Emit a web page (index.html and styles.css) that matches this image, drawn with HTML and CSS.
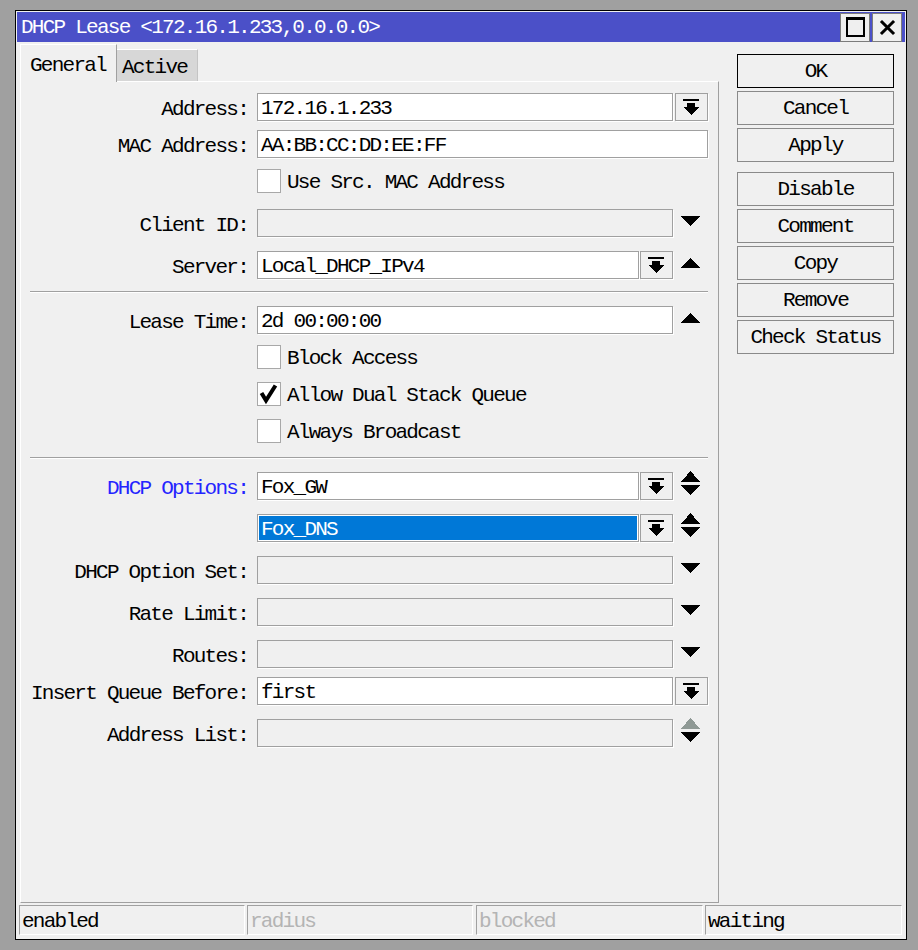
FILE: index.html
```html
<!DOCTYPE html>
<html>
<head>
<meta charset="utf-8">
<link rel="stylesheet" href="styles.css">
</head>
<body>
<div class="window">
  <div class="titlebar">
    <span class="title">DHCP Lease &lt;172.16.1.233,0.0.0.0&gt;</span>
    <div class="tb-buttons">
      <span class="tb-btn"><svg width="28" height="27" viewBox="0 0 28 27"><path d="M5 3H24V23H5Z M7 6V21H22V6Z" fill="#000" fill-rule="evenodd"/></svg></span>
      <span class="tb-btn"><svg width="28" height="27" viewBox="0 0 28 27"><path d="M9 8L20 19M20 8L9 19" stroke="#000" stroke-width="3" stroke-linecap="square"/></svg></span>
    </div>
  </div>
  <div class="main">
    <div class="left">
      <div class="tabs">
        <div class="tab tab-general">General</div>
        <div class="tab tab-active">Active</div>
      </div>
      <div class="panel">
        <div class="row">
          <span class="lbl">Address:</span>
          <div class="field">
            <div class="inp">172.16.1.233</div>
            <div class="dd"><svg width="31" height="26" viewBox="0 0 31 26"><path d="M7 5H23V7H7Z M11 9H19V13H23L15 21L7 13H11Z" fill="#000" shape-rendering="crispEdges"/></svg></div>
          </div>
        </div>
        <div class="row">
          <span class="lbl">MAC Address:</span>
          <div class="field">
            <div class="inp">AA:BB:CC:DD:EE:FF</div>
          </div>
        </div>
        <div class="row">
          <span class="lbl"></span>
          <div class="field check">
            <span class="cb"></span><span class="cbtext">Use Src. MAC Address</span>
          </div>
        </div>
        <div class="row ar">
          <span class="lbl">Client ID:</span>
          <div class="field">
            <div class="inp dis"></div>
            <div class="arr"><svg width="19" height="28" viewBox="0 0 19 28"><polygon points="0,7 19,7 9.5,17" fill="#000"/></svg></div>
          </div>
        </div>
        <div class="row ar">
          <span class="lbl">Server:</span>
          <div class="field">
            <div class="inp">Local_DHCP_IPv4</div>
            <div class="dd n"><svg width="31" height="26" viewBox="0 0 31 26"><path d="M7 5H23V7H7Z M11 9H19V13H23L15 21L7 13H11Z" fill="#000" shape-rendering="crispEdges"/></svg></div>
            <div class="arr"><svg width="19" height="28" viewBox="0 0 19 28"><polygon points="9.5,7 19,17 0,17" fill="#000"/></svg></div>
          </div>
        </div>
        <div class="sep"></div>
        <div class="row ar">
          <span class="lbl">Lease Time:</span>
          <div class="field">
            <div class="inp">2d 00:00:00</div>
            <div class="arr"><svg width="19" height="28" viewBox="0 0 19 28"><polygon points="9.5,7 19,17 0,17" fill="#000"/></svg></div>
          </div>
        </div>
        <div class="row">
          <span class="lbl"></span>
          <div class="field check">
            <span class="cb"></span><span class="cbtext">Block Access</span>
          </div>
        </div>
        <div class="row">
          <span class="lbl"></span>
          <div class="field check">
            <span class="cb"><svg width="22" height="22" viewBox="0 0 22 22"><polyline points="3.5,10 8,17.5 17.5,2.5" fill="none" stroke="#000" stroke-width="4" stroke-linejoin="miter"/></svg></span><span class="cbtext">Allow Dual Stack Queue</span>
          </div>
        </div>
        <div class="row">
          <span class="lbl"></span>
          <div class="field check">
            <span class="cb"></span><span class="cbtext">Always Broadcast</span>
          </div>
        </div>
        <div class="sep"></div>
        <div class="row ar">
          <span class="lbl blue">DHCP Options:</span>
          <div class="field">
            <div class="inp">Fox_GW</div>
            <div class="dd n"><svg width="31" height="26" viewBox="0 0 31 26"><path d="M7 5H23V7H7Z M11 9H19V13H23L15 21L7 13H11Z" fill="#000" shape-rendering="crispEdges"/></svg></div>
            <div class="arr"><svg width="19" height="28" viewBox="0 0 19 28" overflow="visible"><polygon points="9.5,-1 19,10 0,10" fill="#000"/><polygon points="0,13 19,13 9.5,23" fill="#000"/></svg></div>
          </div>
        </div>
        <div class="row ar">
          <span class="lbl"></span>
          <div class="field">
            <div class="inp sel"><span class="selfill">Fox_DNS</span></div>
            <div class="dd n"><svg width="31" height="26" viewBox="0 0 31 26"><path d="M7 5H23V7H7Z M11 9H19V13H23L15 21L7 13H11Z" fill="#000" shape-rendering="crispEdges"/></svg></div>
            <div class="arr"><svg width="19" height="28" viewBox="0 0 19 28" overflow="visible"><polygon points="9.5,-1 19,10 0,10" fill="#000"/><polygon points="0,13 19,13 9.5,23" fill="#000"/></svg></div>
          </div>
        </div>
        <div class="row ar">
          <span class="lbl">DHCP Option Set:</span>
          <div class="field">
            <div class="inp dis"></div>
            <div class="arr"><svg width="19" height="28" viewBox="0 0 19 28"><polygon points="0,7 19,7 9.5,17" fill="#000"/></svg></div>
          </div>
        </div>
        <div class="row ar">
          <span class="lbl">Rate Limit:</span>
          <div class="field">
            <div class="inp dis"></div>
            <div class="arr"><svg width="19" height="28" viewBox="0 0 19 28"><polygon points="0,7 19,7 9.5,17" fill="#000"/></svg></div>
          </div>
        </div>
        <div class="row ar">
          <span class="lbl">Routes:</span>
          <div class="field">
            <div class="inp dis"></div>
            <div class="arr"><svg width="19" height="28" viewBox="0 0 19 28"><polygon points="0,7 19,7 9.5,17" fill="#000"/></svg></div>
          </div>
        </div>
        <div class="row">
          <span class="lbl">Insert Queue Before:</span>
          <div class="field">
            <div class="inp">first</div>
            <div class="dd"><svg width="31" height="26" viewBox="0 0 31 26"><path d="M7 5H23V7H7Z M11 9H19V13H23L15 21L7 13H11Z" fill="#000" shape-rendering="crispEdges"/></svg></div>
          </div>
        </div>
        <div class="row ar">
          <span class="lbl">Address List:</span>
          <div class="field">
            <div class="inp dis"></div>
            <div class="arr"><svg width="19" height="28" viewBox="0 0 19 28" overflow="visible"><polygon points="9.5,-1 19,9.5 0,9.5" fill="#8f9995"/><polygon points="0,13 19,13 9.5,23" fill="#000"/></svg></div>
          </div>
        </div>
      </div>
    </div>
    <div class="btns">
      <div class="btn ok">OK</div>
      <div class="btn">Cancel</div>
      <div class="btn">Apply</div>
      <div class="btn gap">Disable</div>
      <div class="btn">Comment</div>
      <div class="btn">Copy</div>
      <div class="btn">Remove</div>
      <div class="btn">Check Status</div>
    </div>
  </div>
  <div class="status">
    <div class="cell c1">enabled</div>
    <div class="cell c2 faded">radius</div>
    <div class="cell c3 faded">blocked</div>
    <div class="cell c4">waiting</div>
  </div>
</div>
</body>
</html>
```
FILE: styles.css
```css
* { box-sizing: border-box; }
html, body { margin: 0; background: #a0a0a0; }
body {
  font-family: "Liberation Mono", monospace;
  font-size: 21px;
  letter-spacing: -1.75px;
  color: #000;
  width: 918px;
  height: 950px;
  overflow: hidden;
}
.window {
  margin: 10px 0 0 15px;
  width: 892px;
  height: 930px;
  border: 1px solid #000;
  background: #f0f0f0;
  padding: 1px;
  display: flex;
  flex-direction: column;
}
.titlebar {
  height: 30px;
  flex: none;
  background: #4b50c8;
  color: #fff;
  display: flex;
  align-items: center;
  justify-content: space-between;
  padding: 0 3px 0 4px;
}
.title { white-space: pre; padding-top: 2px; line-height: 28px; }
.tb-buttons { display: flex; gap: 2px; align-self: flex-end; }
.tb-btn {
  display: block;
  width: 30px;
  height: 29px;
  background: #efefef;
  border: 1px solid #7c7c7c;
}
.tb-btn svg { display: block; }
.main {
  display: flex;
  height: 861px;
  flex: none;
  padding: 2px 11px 0 3px;
}
.left { width: 699px; display: flex; flex-direction: column; }
.tabs { display: flex; height: 37px; align-items: flex-start; flex: none; }
.tab { white-space: pre; }
.tab-general {
  width: 97px;
  height: 38px;
  margin-bottom: -1px;
  position: relative;
  z-index: 1;
  background: #f0f0f0;
  border-top: 1px solid #fff;
  border-left: 1px solid #fff;
  border-right: 1px solid #a0a0a0;
  padding: 7px 0 0 9px;
  line-height: 28px;
}
.tab-active {
  width: 81px;
  height: 32px;
  margin-top: 5px;
  background: #d7d7d7;
  border-top: 1px solid #fff;
  border-right: 1px solid #c4c4c4;
  padding: 4px 0 0 5px;
  line-height: 28px;
}
.panel {
  height: 822px;
  flex: none;
  border-top: 1px solid #fff;
  border-left: 1px solid #fff;
  border-right: 1px solid #a0a0a0;
  border-bottom: 1px solid #a0a0a0;
  padding-top: 2px;
}
.row {
  display: flex;
  align-items: center;
  height: 28px;
  margin-top: 9px;
}
.row.ar { margin-top: 14px; }
.lbl {
  width: 227px;
  height: 28px;
  flex: none;
  margin-right: 9px;
  text-align: right;
  white-space: pre;
  padding-top: 3px;
  line-height: 28px;
}
.lbl.blue { color: #2424ff; }
.field {
  width: 451px;
  height: 28px;
  flex: none;
  display: flex;
  align-items: center;
}
.inp {
  flex: 1;
  height: 28px;
  border: 1px solid #a0a0a0;
  background: #fff;
  padding: 3px 3px 0;
  line-height: 24px;
  white-space: pre;
  box-shadow: 1px 1px 0 #fff;
}
.inp.dis { background: #f0f0f0; }
.inp.sel { padding: 1px; }
.selfill {
  display: block;
  height: 24px;
  background: #0078d7;
  color: #fff;
  line-height: 24px;
  padding: 2px 0 0 2px;
}
.dd {
  width: 33px;
  height: 28px;
  flex: none;
  margin-left: 2px;
  border: 1px solid #a0a0a0;
  background: #f0f0f0;
  box-shadow: 1px 1px 0 #fff;
}
.dd.n { margin-left: 1px; }
.dd svg { display: block; }
.arr { width: 35px; height: 28px; flex: none; padding-left: 8px; }
.arr svg { display: block; shape-rendering: crispEdges; }
.check { align-items: center; }
.cb {
  width: 24px;
  height: 24px;
  flex: none;
  border: 1px solid #a8a8a8;
  background: #fff;
  margin-right: 6px;
}
.cb svg { display: block; }
.cbtext { white-space: pre; padding-top: 3px; line-height: 28px; }
.sep {
  margin: 12px 0 0 9px;
  width: 678px;
  height: 1px;
  background: #a0a0a0;
  box-shadow: 0 1px 0 #fff;
}
.btns {
  width: 157px;
  flex: none;
  margin-left: 18px;
  padding-top: 10px;
  display: flex;
  flex-direction: column;
  gap: 3px;
}
.btn {
  height: 34px;
  border: 1px solid #8a8a8a;
  background: #f0f0f0;
  text-align: center;
  padding-top: 2px;
  line-height: 30px;
  white-space: pre;
}
.btn.ok { border-color: #000; }
.btn.gap { margin-top: 7px; }
.status {
  display: flex;
  height: 30px;
  flex: none;
  margin: 2px 3px 0 2px;
}
.cell {
  height: 30px;
  border-top: 1px solid #a0a0a0;
  border-left: 1px solid #a0a0a0;
  border-right: 1px solid #fff;
  border-bottom: 1px solid #fff;
  padding: 2px 0 0 2px;
  line-height: 28px;
  white-space: pre;
}
.c1 { width: 226px; }
.c2 { width: 226px; margin-left: 2px; }
.c3 { width: 227px; margin-left: 3px; }
.c4 { width: 197px; margin-left: 2px; }
.faded { color: #b4b4b4; }
```
